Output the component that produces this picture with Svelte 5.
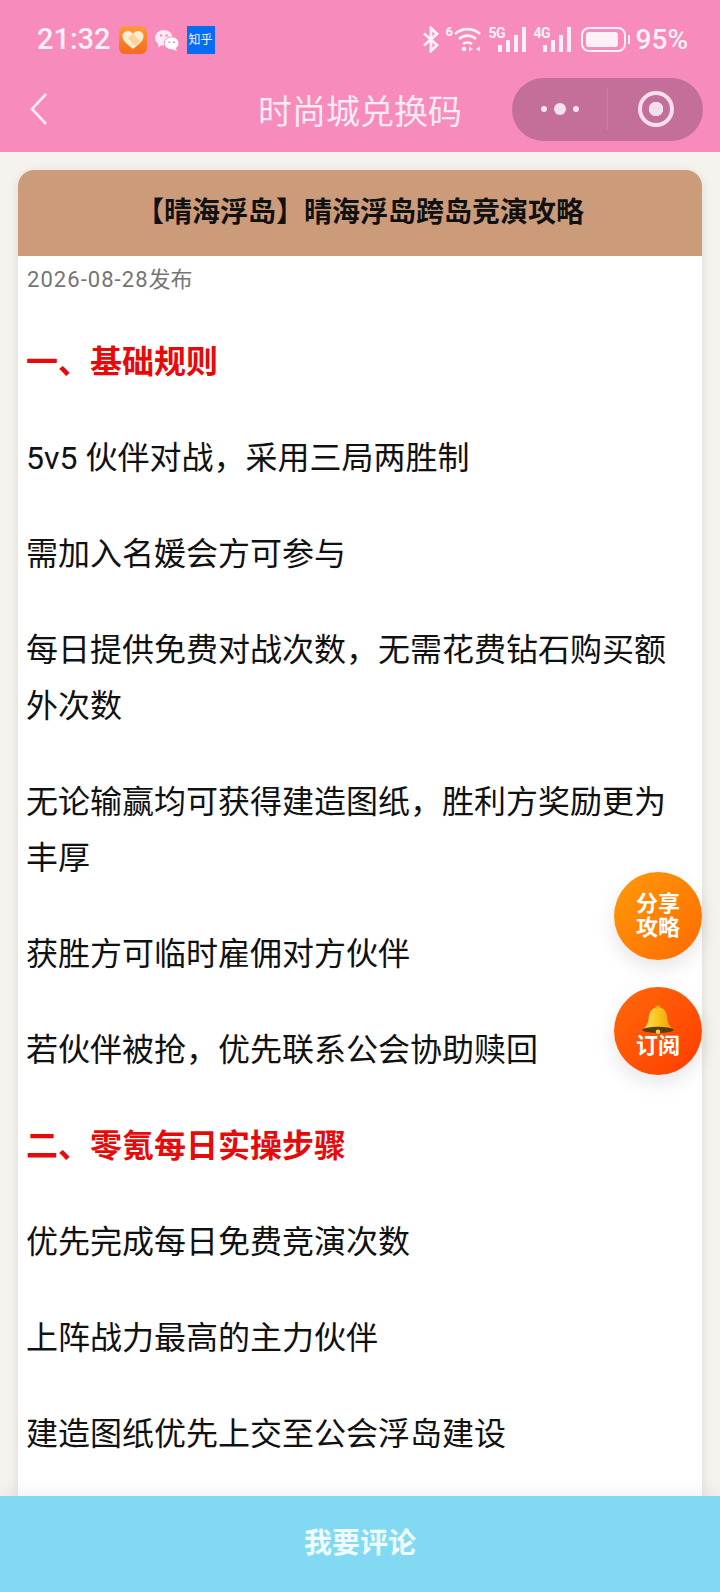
<script>
  // 正文内容
  const blocks = [
    { type: 'h', text: '一、基础规则' },
    { type: 'p', text: '5v5 伙伴对战，采用三局两胜制' },
    { type: 'p', text: '需加入名媛会方可参与' },
    { type: 'p', text: '每日提供免费对战次数，无需花费钻石购买额外次数' },
    { type: 'p', text: '无论输赢均可获得建造图纸，胜利方奖励更为丰厚' },
    { type: 'p', text: '获胜方可临时雇佣对方伙伴' },
    { type: 'p', text: '若伙伴被抢，优先联系公会协助赎回' },
    { type: 'h', text: '二、零氪每日实操步骤' },
    { type: 'p', text: '优先完成每日免费竞演次数' },
    { type: 'p', text: '上阵战力最高的主力伙伴' },
    { type: 'p', text: '建造图纸优先上交至公会浮岛建设' }
  ];
</script>

<div class="page">
  <header class="top">
    <div class="status">
      <div class="status-left">
        <span class="time">21:32</span>
        <svg class="app-icon" width="28" height="28" viewBox="0 0 28 28">
          <defs>
            <linearGradient id="heartBg" x1="0" y1="0" x2="0" y2="1">
              <stop offset="0" stop-color="#ff9a3c" />
              <stop offset="1" stop-color="#f56a1a" />
            </linearGradient>
          </defs>
          <rect width="28" height="28" rx="6" fill="url(#heartBg)" />
          <path d="M14 23 C8 18 3.500 15 3.500 10 C3.500 6.500 6.500 5 9 5 C11 5 13 6 14 8 C15 6 17 5 19 5 C21.500 5 24.500 6.500 24.500 10 C24.500 15 20 18 14 23 Z" fill="#fdeccf" />
          <path d="M9 12 L14 8 L21 15 L16 20 Z" fill="#fbd39a" />
        </svg>
        <svg class="app-icon" width="26" height="23" viewBox="0 0 28 25">
          <ellipse cx="10.500" cy="9.500" rx="9.500" ry="8.500" fill="#fdeaf3" />
          <path d="M5 15 L4 20 L9 17 Z" fill="#fdeaf3" />
          <ellipse cx="19" cy="15.500" rx="8" ry="7" fill="#fff" stroke="#f78bbc" stroke-width="1" />
          <path d="M23 20 L25 24 L20 22 Z" fill="#fff" />
          <circle cx="7.500" cy="7" r="1.300" fill="#f78bbc" />
          <circle cx="13.500" cy="7" r="1.300" fill="#f78bbc" />
          <circle cx="16.500" cy="14.500" r="1.100" fill="#f78bbc" />
          <circle cx="21.500" cy="14.500" r="1.100" fill="#f78bbc" />
        </svg>
        <span class="zhihu">知乎</span>
      </div>
      <div class="status-right">
        <svg class="bt" width="18" height="27" viewBox="0 0 18 27" fill="none" stroke="#fdf0f6" stroke-width="2.800">
          <path d="M2 7.500 L15 19 L9 25 V2 L15 8 L2 19.500" />
        </svg>
        <div class="wifi">
          <span class="tiny six">6</span>
          <svg width="27" height="25" viewBox="0 0 27 25" fill="none" stroke="#fdf0f6" stroke-width="2.600">
            <path d="M1 7 C8 0.500 19 0.500 26 7" />
            <path d="M5 12 C10 7.500 17 7.500 22 12" />
            <path d="M9 17 C11.500 15 15.500 15 18 17" />
            <circle cx="10" cy="22" r="2.300" fill="#fdf0f6" stroke="none" />
            <path d="M15 19.500 L19 22 L15 24.500 Z M26 19.500 L22 22 L26 24.500 Z" fill="#fdf0f6" stroke="none" />
          </svg>
        </div>
        <div class="signal">
          <span class="tiny">5G</span>
          <i style="height: 7px"></i><i style="height: 12px"></i><i style="height: 17px"></i><i style="height: 25px"></i>
        </div>
        <div class="signal">
          <span class="tiny">4G</span>
          <i style="height: 7px"></i><i style="height: 12px"></i><i style="height: 17px"></i><i style="height: 25px"></i>
        </div>
        <div class="battery">
          <div class="battery-body"><div class="battery-fill"></div></div>
          <div class="battery-cap"></div>
        </div>
        <span class="percent">95%</span>
      </div>
    </div>

    <div class="nav">
      <svg class="back" width="20" height="34" viewBox="0 0 20 34" fill="none" stroke="#fdeaf3" stroke-width="2.600">
        <path d="M17 2 L3 17 L17 32" />
      </svg>
      <div class="nav-title">时尚城兑换码</div>
      <div class="capsule">
        <div class="dots"><span></span><span class="big"></span><span></span></div>
        <div class="divider"></div>
        <div class="target"><span></span></div>
      </div>
    </div>
  </header>

  <main class="content">
    <article class="card">
      <div class="card-head">【晴海浮岛】晴海浮岛跨岛竞演攻略</div>
      <div class="card-body">
        <div class="date"><span class="date-num">2026-08-28</span>发布</div>
        {#each blocks as b}
          {#if b.type === 'h'}
            <h3>{b.text}</h3>
          {:else}
            <p>{b.text}</p>
          {/if}
        {/each}
      </div>
    </article>
  </main>

  <div class="fab share">分享<br />攻略</div>
  <div class="fab sub">
    <svg class="bell" width="34" height="32" viewBox="0 0 38 34">
      <defs>
        <linearGradient id="bellFill" x1="0" y1="0" x2="1" y2="0">
          <stop offset="0" stop-color="#ffe066" />
          <stop offset="0.5" stop-color="#fcc419" />
          <stop offset="1" stop-color="#e69a10" />
        </linearGradient>
      </defs>
      <circle cx="19" cy="3.500" r="3" fill="#e8a21a" />
      <path d="M19 3 C11 3 9 9 8.500 16 C8 21 6 24 2 28 H36 C32 24 30 21 29.500 16 C29 9 27 3 19 3 Z" fill="url(#bellFill)" />
      <ellipse cx="19" cy="28" rx="17.500" ry="3.500" fill="#5a3b12" />
      <circle cx="19" cy="30" r="2.500" fill="#f6d04a" />
    </svg>
    <span>订阅</span>
  </div>

  <footer class="bar">我要评论</footer>
</div>

<style>
  :global(body) {
    margin: 0;
  }
  .page {
    position: relative;
    display: flex;
    flex-direction: column;
    width: 720px;
    height: 1592px;
    overflow: hidden;
    background: #f6f3ee;
    font-family: "Roboto", "Noto Sans CJK SC", sans-serif;
  }

  .top {
    height: 152px;
    flex-shrink: 0;
    background: #f78bbc;
    color: #fdeaf3;
  }
  .status {
    display: flex;
    justify-content: space-between;
    align-items: center;
    height: 78px;
    padding: 0 32px 0 37px;
  }
  .status-left {
    display: flex;
    align-items: center;
  }
  .time {
    color: #fdf0f6;
    font-size: 29px;
    font-weight: 500;
    margin-right: 8px;
  }
  .app-icon {
    margin-top: 2px;
    margin-right: 7px;
  }
  .zhihu {
    width: 28px;
    height: 28px;
    margin-top: 2px;
    background: #0a6cf5;
    color: #f0f8ff;
    font-size: 12px;
    line-height: 28px;
    text-align: center;
  }
  .status-right {
    display: flex;
    align-items: center;
  }
  .bt {
    margin-right: 6px;
  }
  .tiny {
    position: absolute;
    left: 0;
    top: -1px;
    color: #fdf0f6;
    font-size: 14px;
    font-weight: 700;
    letter-spacing: -0.5px;
    line-height: 14px;
  }
  .wifi {
    position: relative;
    height: 25px;
    margin-right: 8px;
    padding-left: 8px;
  }
  .six {
    top: -2px;
    font-size: 13px;
  }
  .signal {
    position: relative;
    display: flex;
    align-items: flex-end;
    gap: 4px;
    height: 25px;
    margin-right: 8px;
    padding-left: 9px;
  }
  .signal i {
    width: 4px;
    background: #fdf0f6;
  }
  .battery {
    display: flex;
    align-items: center;
    gap: 2px;
    margin-left: 2px;
    margin-right: 6px;
  }
  .battery-body {
    box-sizing: border-box;
    width: 45px;
    height: 25px;
    padding: 3px;
    border: 2px solid #fdf0f6;
    border-radius: 8px;
  }
  .battery-fill {
    width: 92%;
    height: 100%;
    background: #fdf0f6;
    border-radius: 3px;
  }
  .battery-cap {
    width: 2px;
    height: 9px;
    background: #fdf0f6;
  }
  .percent {
    color: #fdf0f6;
    font-size: 28px;
    font-weight: 500;
  }

  .nav {
    position: relative;
    display: flex;
    justify-content: space-between;
    align-items: center;
    height: 62px;
    padding: 0 17px 0 29px;
  }
  .nav-title {
    position: absolute;
    left: 0;
    right: 0;
    text-align: center;
    font-size: 34px;
    font-weight: 400;
    pointer-events: none;
  }
  .capsule {
    display: flex;
    align-items: center;
    width: 191px;
    height: 63px;
    border-radius: 32px;
    background: #c36f99;
  }
  .dots {
    display: flex;
    align-items: center;
    justify-content: center;
    gap: 7px;
    flex: 1;
  }
  .dots span {
    width: 6px;
    height: 6px;
    border-radius: 50%;
    background: #f4e3ec;
  }
  .dots .big {
    width: 12px;
    height: 12px;
  }
  .divider {
    width: 1px;
    height: 42px;
    background: #cc7ea5;
  }
  .target {
    display: flex;
    align-items: center;
    justify-content: center;
    flex: 1;
  }
  .target span {
    box-sizing: border-box;
    width: 36px;
    height: 36px;
    border: 4px solid #f8dfeb;
    border-radius: 50%;
    background: radial-gradient(circle, #f0dfe8 0 7px, transparent 7.500px);
  }

  .content {
    flex: 1;
    min-height: 0;
    padding: 18px 18px 0;
    overflow: hidden;
  }
  .card {
    height: 100%;
    border-radius: 16px 16px 0 0;
    background: #fff;
    box-shadow: 0 2px 12px rgba(0, 0, 0, 0.1);
    overflow: hidden;
  }
  .card-head {
    height: 86px;
    line-height: 86px;
    background: #cc9c7a;
    color: #111;
    font-size: 28px;
    font-weight: 700;
    text-align: center;
  }
  .card-body {
    padding: 7px 8px 0;
  }
  .date {
    height: 31px;
    margin-left: 1px;
    line-height: 34px;
    color: #757575;
    font-size: 22px;
  }
  .date-num {
    letter-spacing: 1.050px;
  }
  h3 {
    margin: 40px 0;
    color: #e60a0a;
    font-size: 32px;
    font-weight: 700;
    line-height: 56px;
  }
  p {
    margin: 40px 0;
    color: #111;
    font-size: 32px;
    line-height: 56px;
  }

  .fab {
    position: absolute;
    right: 18px;
    display: flex;
    flex-direction: column;
    align-items: center;
    justify-content: center;
    width: 88px;
    height: 88px;
    border-radius: 50%;
    color: #fff;
    font-size: 22px;
    font-weight: 700;
    line-height: 24px;
    text-align: center;
    box-shadow: 0 8px 20px rgba(0, 0, 0, 0.1);
  }
  .share {
    top: 872px;
    background: linear-gradient(135deg, #ff9a0a, #ff6a00);
  }
  .sub {
    top: 987px;
    background: linear-gradient(135deg, #ff6a0a, #ff3c00);
  }
  .bell {
    margin-bottom: -2px;
  }
  .bar {
    position: relative;
    height: 96px;
    flex-shrink: 0;
    background: #81daf1;
    color: #f0fbff;
    font-size: 28px;
    font-weight: 700;
    line-height: 96px;
    text-align: center;
    box-shadow: 0 -6px 14px rgba(0, 0, 0, 0.05);
  }
</style>
